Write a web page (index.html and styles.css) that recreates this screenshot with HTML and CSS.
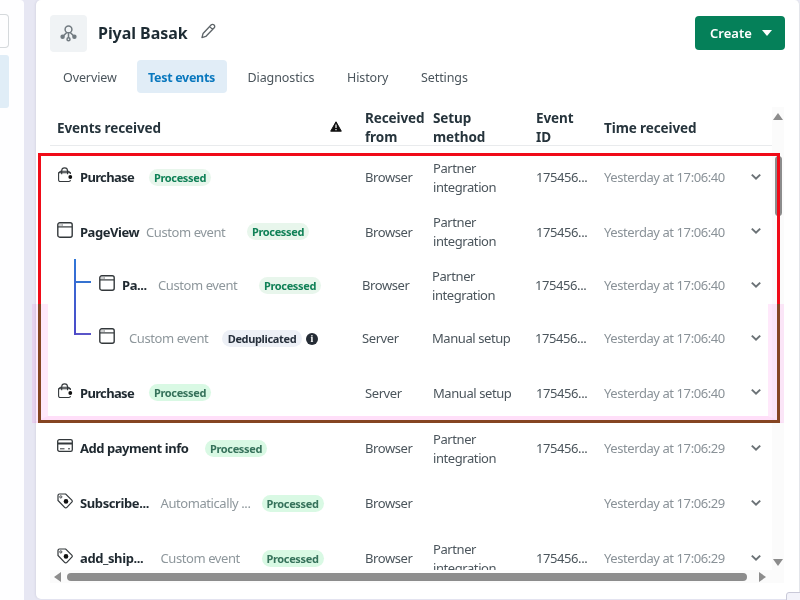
FILE: index.html
```html
<!DOCTYPE html>
<html lang="en">
  <head>
    <meta charset="UTF-8" />
    <title>Test events</title>
    <link rel="stylesheet" href="styles.css">
  </head>
  <body>
    <svg class="icon-defs" width="0" height="0">
      <symbol id="i-bag" viewBox="0 0 16 16">
        <path d="M13.400 7V5.800H1.600V13a1.500 1.500 0 0 0 1.500 1.500h8.800a1.500 1.500 0 0 0 1.500-1.500M1.800 5.600l1.600-1.300h8.200l1.600 1.300M4.700 7.300V3.800a2.900 2.900 0 0 1 5.800 0v3.500" fill="none" stroke="currentColor" stroke-width="1.100" />
        <circle cx="13.300" cy="10" r="1.900" fill="#111" />
      </symbol>
      <symbol id="i-window" viewBox="0 0 16 16">
        <rect x=".8" y=".8" width="14.400" height="14.400" rx="2" fill="none" stroke="currentColor" stroke-width="1.400" />
        <path d="M1 4.900h14" stroke="currentColor" stroke-width="1.200" />
        <path d="M2.500 3h3.400" stroke="currentColor" stroke-width=".9" stroke-dasharray=".8 .5" />
      </symbol>
      <symbol id="i-card" viewBox="0 0 16 16">
        <rect x=".7" y="1.700" width="14.600" height="11.600" rx="1.600" fill="none" stroke="currentColor" stroke-width="1.300" />
        <path d="M1 5.500h14" stroke="currentColor" stroke-width="2" />
        <path d="M3 10.800h4.500M11 10.800h2" stroke="currentColor" stroke-width="1" />
      </symbol>
      <symbol id="i-tag" viewBox="0 0 16 16">
        <path d="M1 2.400v5l6.600 7a1.600 1.600 0 0 0 2.300 0l4.900-5.200a1.600 1.600 0 0 0 0-2.100L8.700 1H2.400A1.400 1.400 0 0 0 1 2.400z" fill="none" stroke="currentColor" stroke-width="1.200" />
        <circle cx="3.800" cy="3.900" r="1.100" fill="none" stroke="currentColor" stroke-width=".9" />
        <circle cx="9" cy="8.400" r="2.300" fill="#111" />
      </symbol>
      <symbol id="i-chevron" viewBox="0 0 12 8">
        <path d="M1.800 1.600L6 5.600l4.200-4" fill="none" stroke="#6b7276" stroke-width="2" />
      </symbol>
    </svg>

    <div class="page">
      <aside class="sidebar">
        <div class="side-box"></div>
        <div class="side-active"></div>
      </aside>

      <main class="panel">
        <header class="header">
          <div class="logo">
            <svg width="17" height="17" viewBox="0 0 17 17" fill="none" stroke="#727b81" stroke-width="1.500">
              <circle cx="8.500" cy="4.400" r="3.400" />
              <path d="M8.500 8v5M7 7.200L3 11.300M10 7.200l4 4.100" />
              <circle cx="2.600" cy="11.700" r="1.500" fill="#727b81" />
              <circle cx="14.400" cy="11.700" r="1.500" fill="#727b81" />
              <circle cx="8.500" cy="14.200" r="1.500" />
            </svg>
          </div>
          <h1>Piyal Basak</h1>
          <svg class="pencil" width="15" height="16" viewBox="0 0 16 17" fill="none" stroke="#5d6468" stroke-width="1.400" stroke-linejoin="round">
            <path d="M1 15.600l1.200-4.400L11 1.900a1.800 1.800 0 0 1 2.600 0l.5.500a1.800 1.800 0 0 1 0 2.600l-9 9.300zM9.300 3.800l3 3" />
          </svg>
          <button class="create">Create <span class="caret"></span></button>
        </header>

        <nav class="tabs">
          <a class="tab overview">Overview</a>
          <a class="tab active">Test events</a>
          <a class="tab diagnostics">Diagnostics</a>
          <a class="tab history">History</a>
          <a class="tab">Settings</a>
        </nav>

        <div class="table-area">
          <div class="table">
            <div class="row head">
              <div class="event">Events received
                <svg class="warn" width="12" height="11" viewBox="0 0 12 11">
                  <path d="M6 .8L11.300 10.200H.7z" fill="#111" stroke="#111" stroke-linejoin="round" />
                  <path d="M6 3.500v3.500M6 8v1.300" stroke="#fff" stroke-width="1.200" />
                </svg>
              </div>
              <div>Received from</div>
              <div>Setup<br>method</div>
              <div>Event<br>ID</div>
              <div class="time-head">Time received</div>
            </div>

            <div class="row">
              <div class="event"><svg class="icon"><use href="#i-bag" /></svg><b class="purchase">Purchase</b><span class="badge">Processed</span></div>
              <div>Browser</div>
              <div>Partner<br>integration</div>
              <div>175456...</div>
              <div class="time">Yesterday at 17:06:40</div>
              <svg class="chevron"><use href="#i-chevron" /></svg>
            </div>
            <div class="row pageview">
              <div class="event"><svg class="icon"><use href="#i-window" /></svg><b class="view">PageView</b><span class="kind">Custom event</span><span class="badge far">Processed</span></div>
              <div>Browser</div>
              <div>Partner<br>integration</div>
              <div>175456...</div>
              <div class="time">Yesterday at 17:06:40</div>
              <svg class="chevron"><use href="#i-chevron" /></svg>
            </div>

            <div class="children">
              <div class="branch"><span></span><span></span></div>
              <div class="child-rows">
                <div class="row child">
                  <div class="event"><svg class="icon"><use href="#i-window" /></svg><b class="short">Pa...</b><span class="kind wide">Custom event</span><span class="badge far">Processed</span></div>
                  <div>Browser</div>
                  <div>Partner<br>integration</div>
                  <div>175456...</div>
                  <div class="time">Yesterday at 17:06:40</div>
                  <svg class="chevron"><use href="#i-chevron" /></svg>
                </div>
                <div class="row child">
                  <div class="event"><svg class="icon"><use href="#i-window" /></svg><span class="kind">Custom event</span><span class="badge gray">Deduplicated</span><span class="info">i</span></div>
                  <div>Server</div>
                  <div>Manual setup</div>
                  <div>175456...</div>
                  <div class="time">Yesterday at 17:06:40</div>
                  <svg class="chevron"><use href="#i-chevron" /></svg>
                </div>
              </div>
            </div>

            <div class="row">
              <div class="event"><svg class="icon"><use href="#i-bag" /></svg><b class="purchase">Purchase</b><span class="badge mint">Processed</span></div>
              <div>Server</div>
              <div>Manual setup</div>
              <div>175456...</div>
              <div class="time">Yesterday at 17:06:40</div>
              <svg class="chevron"><use href="#i-chevron" /></svg>
            </div>
            <div class="row">
              <div class="event"><svg class="icon"><use href="#i-card" /></svg><b class="payment">Add payment info</b><span class="badge mint">Processed</span></div>
              <div>Browser</div>
              <div>Partner<br>integration</div>
              <div>175456...</div>
              <div class="time">Yesterday at 17:06:29</div>
              <svg class="chevron"><use href="#i-chevron" /></svg>
            </div>
            <div class="row">
              <div class="event"><svg class="icon"><use href="#i-tag" /></svg><b class="cut">Subscribe...</b><span class="kind cut-kind">Automatically ...</span><span class="badge mint">Processed</span></div>
              <div>Browser</div>
              <div></div>
              <div></div>
              <div class="time">Yesterday at 17:06:29</div>
              <svg class="chevron"><use href="#i-chevron" /></svg>
            </div>
            <div class="row last">
              <div class="event"><svg class="icon"><use href="#i-tag" /></svg><b class="cut">add_ship...</b><span class="kind cut-kind">Custom event</span><span class="badge mint">Processed</span></div>
              <div>Browser</div>
              <div>Partner<br>integration</div>
              <div>175456...</div>
              <div class="time">Yesterday at 17:06:29</div>
              <svg class="chevron"><use href="#i-chevron" /></svg>
            </div>
          </div>

          <div class="scroll-y"><i class="up"></i><i class="thumb"></i><i class="down"></i></div>
          <div class="scroll-x"><i class="left"></i><i class="thumb"></i><i class="right"></i></div>
        </div>
      </main>

      <div class="highlight"><div class="tint"></div><div class="outline"></div></div>
      <div class="corner"></div>
    </div>
  </body>
</html>
```
FILE: styles.css
```css
* {
  box-sizing: border-box;
}

body {
  margin: 0;
  font-family: "Noto Sans", "Open Sans", sans-serif;
  background: #e7e7f3;
  color: #4b555c;
}

.icon-defs {
  position: absolute;
}

.page {
  position: relative;
  width: 800px;
  height: 600px;
  display: flex;
  gap: 12px;
  overflow: hidden;
}

.sidebar {
  width: 24px;
  background: #fefeff;
  border-radius: 0 4px 0 0;
  padding-top: 14px;
}

.side-box {
  width: 9px;
  height: 34px;
  border: 1px solid #d5d9dc;
  border-left: none;
  border-radius: 0 4px 4px 0;
}

.side-active {
  width: 9px;
  height: 53px;
  margin-top: 7px;
  background: #e0edf7;
  border-radius: 0 3px 3px 0;
}

.panel {
  width: 764px;
  height: 599px;
  background: #fff;
  border-right: 1px solid #e3e5ea;
  border-radius: 5px;
  box-shadow: -1px 0 2px #d9d9e6;
  padding: 14px 14px 0 14px;
}

.header {
  display: flex;
  align-items: center;
  height: 38px;
}

.logo {
  width: 37px;
  height: 37px;
  background: #f0f3f5;
  border-radius: 4px;
  display: flex;
  align-items: center;
  justify-content: center;
}

h1 {
  margin: 0 0 0 11px;
  width: 91px;
  font-size: 16px;
  font-weight: 700;
  letter-spacing: -0.05px;
  color: #1d2b33;
  white-space: nowrap;
}

.pencil {
  margin: -5px 0 0 12px;
}

.create {
  margin-left: auto;
  width: 90px;
  height: 34px;
  border: none;
  border-radius: 4px;
  background: #058059;
  color: #fff;
  font: 600 13px "Noto Sans", sans-serif;
  display: flex;
  align-items: center;
  justify-content: space-between;
  padding: 0 13px 0 15px;
}

.caret {
  border: 5px solid transparent;
  border-top: 6px solid #fff;
  border-bottom: none;
}

.tabs {
  display: flex;
  margin-top: 8px;
  height: 33px;
  font-size: 12.500px;
  line-height: 36px;
  letter-spacing: -0.1px;
}

.tab {
  white-space: nowrap;
}

.overview {
  width: 86.500px;
  padding-left: 13px;
}

.tab.active {
  width: 90px;
  margin-right: 21px;
  text-align: center;
  background: #e1edf7;
  border-radius: 4px;
  color: #0a78be;
  font-weight: 700;
  letter-spacing: -0.3px;
}

.diagnostics {
  width: 99.500px;
}

.history {
  width: 74px;
}

.table-area {
  display: grid;
  grid-template-columns: 722px 12px;
  grid-template-rows: 463px 13px;
  margin-top: 14px;
}

.table {
  overflow: hidden;
}

.row {
  display: grid;
  grid-template-columns: 308px 68px 103px 68px 146px 12px;
  align-items: center;
  height: 55px;
  padding-left: 7px;
  font-size: 13px;
  line-height: 19px;
}

.row > div {
  letter-spacing: -0.42px;
}

.row.head {
  height: 39px;
  margin-bottom: 4px;
  padding-top: 2px;
  border-bottom: 1px solid #e9ebed;
  font-size: 13.500px;
  font-weight: 700;
  color: #26343c;
}

.row.head > div {
  letter-spacing: -0.1px;
}

.row.pageview {
  height: 54px;
}

.event {
  display: flex;
  align-items: center;
  white-space: nowrap;
}

.warn {
  margin: -4px 23px 0 auto;
}

.icon {
  flex: none;
  width: 16px;
  height: 16px;
  margin: -5px 7px 0 0;
  color: #33383b;
}

.event b {
  font-weight: 700;
  letter-spacing: -0.4px;
  color: #1f2930;
}

.event .purchase {
  width: 54px;
  letter-spacing: -0.65px;
}

.event .view {
  width: 59px;
  letter-spacing: -0.45px;
}

.short {
  width: 26px;
}

.kind {
  width: 80px;
  margin-left: 7px;
  color: #8e979c;
}

.badge {
  margin: -1px 0 0 15px;
  width: 62px;
  height: 17px;
  border-radius: 9px;
  background: #e8f6ec;
  color: #108157;
  font-size: 11px;
  font-weight: 700;
  letter-spacing: -0.35px;
  line-height: 17px;
  text-align: center;
}

.badge.far {
  margin-left: 21px;
}

.badge.mint {
  background: #d9f9e4;
  color: #36725b;
}

.badge.gray {
  width: 80px;
  margin-left: 13px;
  background: #edf0f6;
  color: #27303c;
}

.info {
  width: 12px;
  height: 12px;
  margin-left: 4px;
  border-radius: 50%;
  background: #252c35;
  color: #fff;
  font: bold 10px/12px "Liberation Serif", serif;
  letter-spacing: 0;
  text-align: center;
}

.event .payment {
  width: 110px;
  letter-spacing: -0.45px;
}

.cut {
  width: 73.500px;
}

.cut-kind {
  width: 92px;
}

.cut-kind + .badge {
  margin-left: 9px;
}

.time {
  color: #8a9298;
  white-space: nowrap;
}

.chevron {
  width: 12px;
  height: 8px;
  margin-top: -2px;
}

.children {
  display: flex;
  padding-left: 24px;
}

.branch {
  width: 17px;
  height: 76px;
  border-left: 2px solid;
  border-image: linear-gradient(#2f78d8, #4d48c8) 1;
}

.branch span {
  display: block;
  height: 24px;
  border-bottom: 2px solid #3572d0;
}

.branch span + span {
  height: 52px;
  border-color: #5a55c8;
}

.row.child {
  grid-template-columns: 263px 70px 103px 69px 146px 12px;
  height: 53px;
  padding-left: 8px;
}

.children + .row {
  height: 56px;
}

.child .wide {
  margin-left: 10px;
}

.scroll-y {
  display: flex;
  flex-direction: column;
  align-items: center;
  padding: 6px 0 4px;
  background: #fbfbfb;
}

.scroll-y .thumb {
  width: 7px;
  height: 60px;
  margin-top: 36px;
  border-radius: 4px;
  background: #8c8c8c;
}

.up,
.down {
  border: 5px solid transparent;
}

.up {
  border-top: none;
  border-bottom: 7px solid #8c8c8c;
}

.down {
  margin-top: auto;
  border-bottom: none;
  border-top: 7px solid #8c8c8c;
}

.scroll-x {
  grid-column: 1 / 3;
  display: flex;
  align-items: center;
  padding-left: 4px;
  background: #fbfbfb;
}

.scroll-x .thumb {
  width: 680px;
  height: 8px;
  margin: 0 12px 0 6px;
  border-radius: 4px;
  background: #8c8c8c;
}

.left,
.right {
  border: 5px solid transparent;
}

.left {
  border-left: none;
  border-right: 7px solid #8c8c8c;
}

.right {
  border-right: none;
  border-left: 7px solid #8c8c8c;
}

/* marked block of events, lies over the table */
.highlight {
  position: absolute;
  left: 32px;
  top: 153px;
  width: 752px;
  height: 270px;
}

.tint {
  position: absolute;
  inset: 151px 0 0 0;
  border: solid #ffe9fb;
  border-bottom-color: #ffdff9;
  border-width: 0 16px 7px;
  mix-blend-mode: multiply;
}

.outline {
  position: absolute;
  inset: 0 4px 0 6px;
  border: 3px solid;
  border-image: linear-gradient(#f00b18 151px, #854522 151px) 3;
}

.corner {
  position: absolute;
  left: 786px;
  top: 592px;
  width: 20px;
  height: 20px;
  border: 1px solid #c9c9d8;
  border-radius: 3px;
  background: #f3f3fa;
}
```
